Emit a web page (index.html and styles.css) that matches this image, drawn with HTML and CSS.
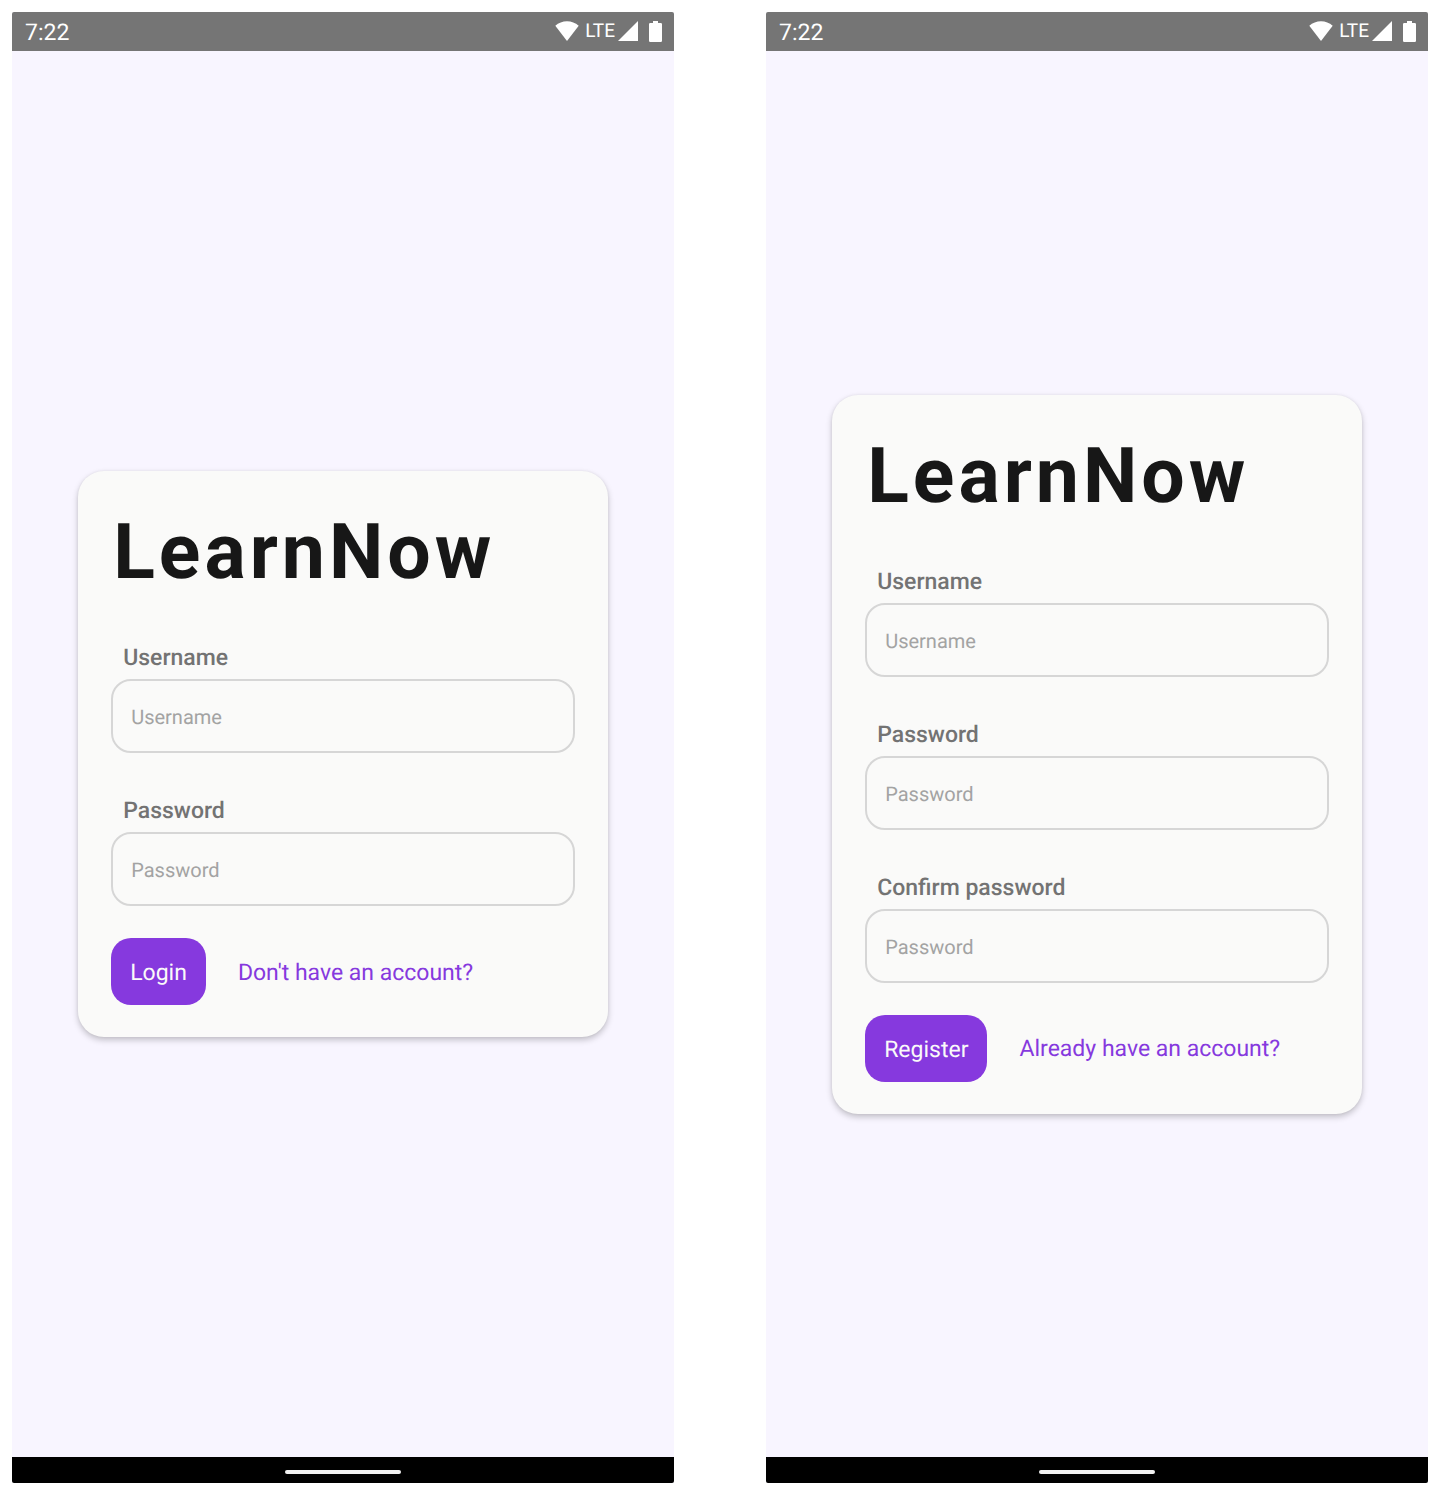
FILE: index.html
```html
<!DOCTYPE html>
<html lang="en">
<head>
<meta charset="utf-8">
<meta name="viewport" content="width=device-width, initial-scale=1">
<title>LearnNow</title>
<link rel="stylesheet" href="styles.css">
</head>
<body>
<svg class="sprite" width="0" height="0" aria-hidden="true">
  <symbol id="wifi" viewBox="0 0 24 20"><path d="M0.3 4.8Q5.3 0.2 12 0.2T23.7 4.8L12 20Z"/></symbol>
  <symbol id="signal" viewBox="0 0 20 20"><path d="M20 0V20H0Z"/></symbol>
  <symbol id="battery" viewBox="0 0 13 21"><path d="M4 0H9V2H11.8Q13 2 13 3.200V19.800Q13 21 11.800 21H1.200Q0 21 0 19.800V3.200Q0 2 1.200 2H4Z"/></symbol>
</svg>
<main class="screens">
  <section class="phone" id="login" aria-label="Login">
    <header class="status">
      <time class="clock">7:22</time>
      <svg class="wifi"><use href="#wifi"/></svg>
      <span class="network">LTE</span>
      <svg class="signal"><use href="#signal"/></svg>
      <svg class="battery"><use href="#battery"/></svg>
    </header>
    <div class="content">
      <form class="card">
        <h1 class="title">LearnNow</h1>
        <div class="fields">
          <div class="field">
            <label class="label" for="login-user">Username</label>
            <input class="input" id="login-user" type="text" placeholder="Username">
          </div>
          <div class="field">
            <label class="label" for="login-pass">Password</label>
            <input class="input" id="login-pass" type="password" placeholder="Password">
          </div>
        </div>
        <div class="actions">
          <button class="button" type="button">Login</button>
          <a class="link" href="#register">Don't have an account?</a>
        </div>
      </form>
    </div>
    <footer class="nav"><span class="handle"></span></footer>
  </section>
  <section class="phone" id="register" aria-label="Register">
    <header class="status">
      <time class="clock">7:22</time>
      <svg class="wifi"><use href="#wifi"/></svg>
      <span class="network">LTE</span>
      <svg class="signal"><use href="#signal"/></svg>
      <svg class="battery"><use href="#battery"/></svg>
    </header>
    <div class="content">
      <form class="card">
        <h1 class="title">LearnNow</h1>
        <div class="fields">
          <div class="field">
            <label class="label" for="reg-user">Username</label>
            <input class="input" id="reg-user" type="text" placeholder="Username">
          </div>
          <div class="field">
            <label class="label" for="reg-pass">Password</label>
            <input class="input" id="reg-pass" type="password" placeholder="Password">
          </div>
          <div class="field">
            <label class="label" for="reg-confirm">Confirm password</label>
            <input class="input" id="reg-confirm" type="password" placeholder="Password">
          </div>
        </div>
        <div class="actions">
          <button class="button" type="button">Register</button>
          <a class="link" href="#login">Already have an account?</a>
        </div>
      </form>
    </div>
    <footer class="nav"><span class="handle"></span></footer>
  </section>
</main>
</body>
</html>
```
FILE: styles.css
```css
* { box-sizing: border-box; }

body {
  margin: 0;
  background: #fff;
  font-family: Roboto, "Liberation Sans", sans-serif;
  text-rendering: geometricPrecision;
}

.sprite { display: none; }

.screens {
  display: grid;
  grid-template-columns: 1fr 1fr;
  gap: 92px;
  min-height: 100vh;
  padding: 12px 12px 17px;
}

.phone {
  display: flex;
  flex-direction: column;
  overflow: hidden;
  border-radius: 2px;
  background: #f8f5ff;
}

.status {
  display: flex;
  align-items: center;
  height: 39px;
  padding: 0 12px 1px 13px;
  background: #757575;
  color: #fff;
  fill: #fff;
}

.clock {
  flex: 1;
  padding-top: 3px;
  font-size: 23px;
  line-height: 35px;
}

.network {
  margin: 0 3px 0 6px;
  font-size: 19px;
  line-height: 38px;
}

.wifi { width: 24px; height: 20px; }
.signal { width: 20px; height: 20px; }
.battery { width: 13px; height: 21px; margin-left: 11px; }

.content {
  display: flex;
  flex: 1;
  align-items: center;
  padding: 32px 10%;
}

.card {
  width: 100%;
  padding: 32px 33px;
  border-radius: 26px;
  background: #fafaf9;
  box-shadow: 0 3px 6px rgba(0, 0, 0, 0.22), 0 0 3px rgba(0, 0, 0, 0.06);
}

.title {
  margin: 0 0 42px;
  padding-left: 2px;
  color: #171717;
  font-size: 77px;
  font-weight: 700;
  line-height: 98px;
  letter-spacing: 4px;
}

.fields {
  display: flex;
  flex-direction: column;
  gap: 43px;
}

.field {
  display: flex;
  flex-direction: column;
  gap: 6px;
}

.label {
  padding-left: 12px;
  color: #737373;
  font-size: 23px;
  font-weight: 500;
  line-height: 30px;
}

.input {
  width: 100%;
  height: 74px;
  padding: 2px 18px 0;
  border: 2px solid #d6d6d6;
  border-radius: 20px;
  background: transparent;
  color: #171717;
  font: 400 20px Roboto, "Liberation Sans", sans-serif;
  text-rendering: inherit;
}

.input::placeholder { color: #a3a3a3; opacity: 1; }

.actions {
  display: flex;
  align-items: center;
  gap: 32px;
  margin-top: 32px;
}

.button {
  height: 67px;
  padding: 2px 19px 0;
  border: 0;
  border-radius: 20px;
  background: #8639de;
  color: #fafaf9;
  font: 400 23px Roboto, "Liberation Sans", sans-serif;
  text-rendering: inherit;
}

.link {
  padding-top: 2px;
  color: #8639de;
  font-size: 23px;
  line-height: 30px;
  text-decoration: none;
}

.nav {
  display: flex;
  align-items: center;
  justify-content: center;
  height: 26px;
  padding-top: 3px;
  background: #000;
}

.handle {
  width: 116px;
  height: 4px;
  border-radius: 2px;
  background: #f2f2f2;
}
```
